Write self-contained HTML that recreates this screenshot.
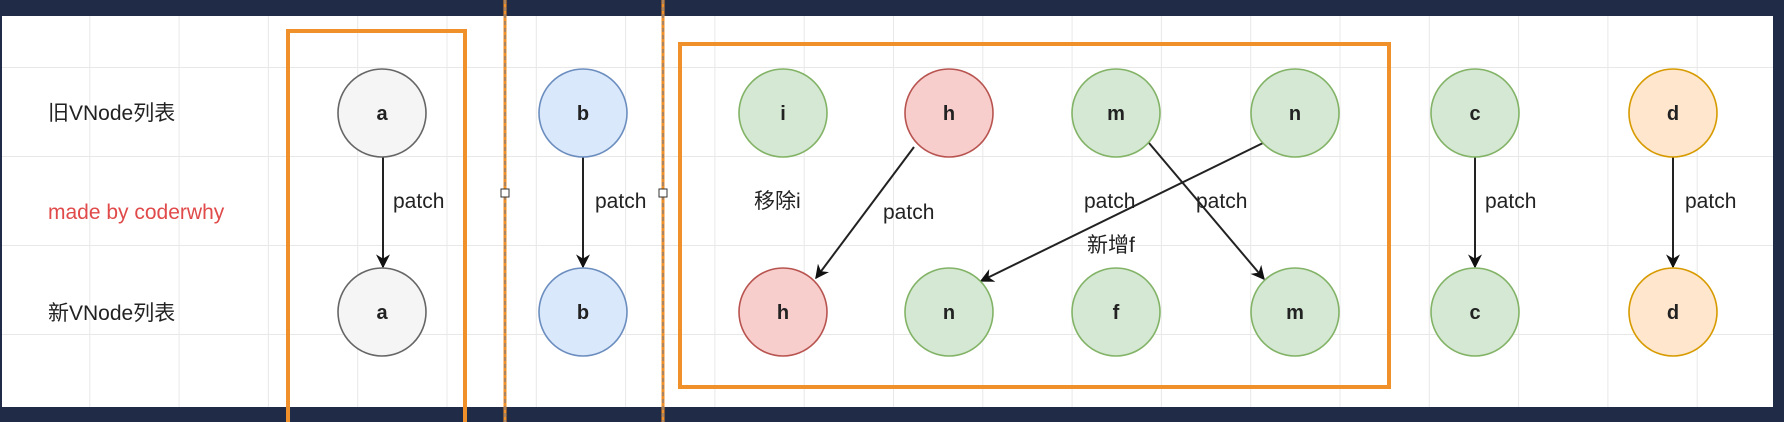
<!DOCTYPE html>
<html><head><meta charset="utf-8"><style>
html,body{margin:0;padding:0;background:#1f2b47;}
svg{display:block}
text{font-family:"Liberation Sans","Noto Sans CJK SC",sans-serif;}
</style></head><body>
<svg width="1784" height="422" viewBox="0 0 1784 422" xmlns="http://www.w3.org/2000/svg">
<defs>
<pattern id="g" x="0" y="-22" width="89.3" height="89" patternUnits="userSpaceOnUse">
<path d="M0.5 0V89M0 0.5H89.3" stroke="#e8e8e8" stroke-width="1" fill="none"/>
</pattern>
<marker id="ar" viewBox="0 0 10 10" refX="9" refY="5" markerWidth="14" markerHeight="14" orient="auto" markerUnits="userSpaceOnUse">
<path d="M0 0L10 5L0 10L3 5z" fill="#111"/>
</marker>
</defs>
<rect x="0" y="0" width="1784" height="422" fill="#1f2b47"/>
<rect x="2" y="16" width="1771" height="391" fill="#fff"/>
<rect x="2" y="16" width="1771" height="391" fill="url(#g)"/>

<rect x="288" y="31" width="177" height="400" fill="none" stroke="#f0902a" stroke-width="4"/>
<rect x="680" y="44" width="709" height="343" fill="none" stroke="#f0902a" stroke-width="4"/>
<line x1="505" y1="0" x2="505" y2="422" stroke="#f0902a" stroke-width="3"/>
<line x1="663" y1="0" x2="663" y2="422" stroke="#f0902a" stroke-width="3"/>
<line x1="505" y1="0" x2="505" y2="422" stroke="#6a7890" stroke-width="1" stroke-dasharray="4 3"/>
<line x1="663" y1="0" x2="663" y2="422" stroke="#6a7890" stroke-width="1" stroke-dasharray="4 3"/>
<rect x="501" y="189" width="8" height="8" fill="#fff" stroke="#333"/>
<rect x="659" y="189" width="8" height="8" fill="#fff" stroke="#333"/>

<g font-size="21" fill="#222">
<text x="48" y="120">旧VNode列表</text>
<text x="48" y="320">新VNode列表</text>
</g>
<text x="48" y="219" font-size="21" fill="#e04a4a">made by coderwhy</text>

<g stroke="#222" stroke-width="2" fill="none" marker-end="url(#ar)">
<line x1="383" y1="157" x2="383" y2="267"/>
<line x1="583" y1="157" x2="583" y2="267"/>
<line x1="1475" y1="157" x2="1475" y2="267"/>
<line x1="1673" y1="157" x2="1673" y2="267"/>
<line x1="914" y1="147" x2="816" y2="278"/>
<line x1="1263" y1="143" x2="981" y2="281"/>
<line x1="1149" y1="143" x2="1264" y2="279"/>
</g>

<g stroke-width="1.6">
<circle cx="382" cy="113" r="44" fill="#f5f5f5" stroke="#666"/>
<circle cx="382" cy="312" r="44" fill="#f5f5f5" stroke="#666"/>
<circle cx="583" cy="113" r="44" fill="#dae8fc" stroke="#6c8ebf"/>
<circle cx="583" cy="312" r="44" fill="#dae8fc" stroke="#6c8ebf"/>
<circle cx="783" cy="113" r="44" fill="#d5e8d4" stroke="#82b366"/>
<circle cx="949" cy="113" r="44" fill="#f8cecc" stroke="#b85450"/>
<circle cx="1116" cy="113" r="44" fill="#d5e8d4" stroke="#82b366"/>
<circle cx="1295" cy="113" r="44" fill="#d5e8d4" stroke="#82b366"/>
<circle cx="1475" cy="113" r="44" fill="#d5e8d4" stroke="#82b366"/>
<circle cx="1673" cy="113" r="44" fill="#ffe6cc" stroke="#d79b00"/>
<circle cx="783" cy="312" r="44" fill="#f8cecc" stroke="#b85450"/>
<circle cx="949" cy="312" r="44" fill="#d5e8d4" stroke="#82b366"/>
<circle cx="1116" cy="312" r="44" fill="#d5e8d4" stroke="#82b366"/>
<circle cx="1295" cy="312" r="44" fill="#d5e8d4" stroke="#82b366"/>
<circle cx="1475" cy="312" r="44" fill="#d5e8d4" stroke="#82b366"/>
<circle cx="1673" cy="312" r="44" fill="#ffe6cc" stroke="#d79b00"/>
</g>
<g font-size="20" fill="#222" text-anchor="middle" font-weight="bold">
<text x="382" y="120">a</text><text x="382" y="319">a</text>
<text x="583" y="120">b</text><text x="583" y="319">b</text>
<text x="783" y="120">i</text><text x="949" y="120">h</text>
<text x="1116" y="120">m</text><text x="1295" y="120">n</text>
<text x="1475" y="120">c</text><text x="1673" y="120">d</text>
<text x="783" y="319">h</text><text x="949" y="319">n</text>
<text x="1116" y="319">f</text><text x="1295" y="319">m</text>
<text x="1475" y="319">c</text><text x="1673" y="319">d</text>
</g>
<g font-size="21" fill="#222">
<text x="393" y="208">patch</text>
<text x="595" y="208">patch</text>
<text x="754" y="208">移除i</text>
<text x="883" y="219">patch</text>
<text x="1084" y="208">patch</text>
<text x="1196" y="208">patch</text>
<text x="1087" y="252">新增f</text>
<text x="1485" y="208">patch</text>
<text x="1685" y="208">patch</text>
</g>
</svg>
</body></html>
